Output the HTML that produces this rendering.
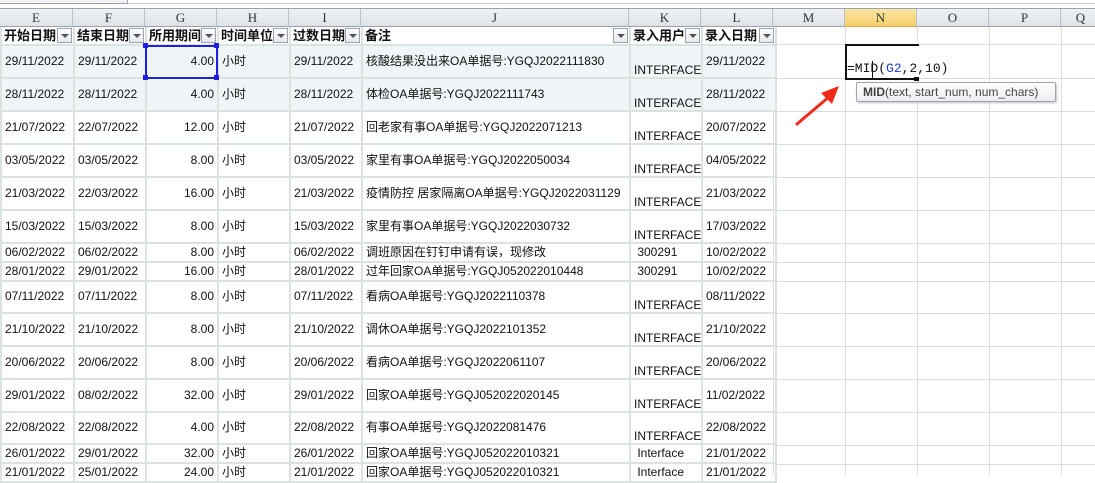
<!DOCTYPE html><html><head><meta charset="utf-8"><style>
*{margin:0;padding:0;box-sizing:border-box}
body{width:1095px;height:474px;overflow:hidden;background:#fff;position:relative;font-family:"Liberation Sans","Noto Sans CJK SC",sans-serif;font-size:12px;color:#111}
.top{position:absolute;left:0;top:0;width:1095px;height:9px;background:#fff;border-bottom:1px solid #9aa3ad}
.top .a{position:absolute;left:0;top:0;width:128px;height:4px;border-right:1px solid #9aa3ad;border-bottom:1px solid #9aa3ad;background:#f3f4f6}
.top .b{position:absolute;left:128px;top:0;width:967px;height:4px;border-bottom:1px solid #c6ccd2}
.ch{position:absolute;top:9px;height:18px;background:linear-gradient(#f0f2f5,#dfe3e8);border-right:1px solid #b9c0c9;border-bottom:1px solid #9aa3ad;font-family:"Liberation Serif",serif;font-size:13px;color:#333;text-align:center;line-height:17px}
.grid{position:absolute;left:773px;top:27px;width:322px;height:447px;
background-image:linear-gradient(90deg,#dadcdd 1px,transparent 1px);background-size:72px 100%;background-position:0 0}
.hl{position:absolute;left:773px;width:322px;height:1px;background:#dadcdd}
table{position:absolute;left:0;top:26px;width:775px;border-collapse:collapse;table-layout:fixed}
td{border:2px solid #dbe3e1;white-space:nowrap;overflow:hidden;padding:0 3px;vertical-align:middle;font-size:12px;line-height:13px}
tr.h td{font-weight:bold;font-size:13px;height:18px;position:relative;padding:0 2px;border-top:1px solid #c8cdd3}
.dd{position:absolute;right:1px;top:1px;width:15px;height:15px;border:1px solid #9aa3ad;background:linear-gradient(#fff,#e6e9ed)}
.dd:after{content:"";position:absolute;left:3px;top:5px;border-left:4px solid transparent;border-right:4px solid transparent;border-top:4px solid #555}
.r td.n{text-align:right}
.r td.k{vertical-align:bottom;padding-bottom:0}
.s td{background:#f0f5f8}
tr.t td{height:33px}
tr.u td{height:32px}
tr.m td{height:19px}
</style></head><body>
<div class="top"><div class="a"></div><div class="b"></div></div>
<div class="grid"></div>
<div class="hl" style="top:44px"></div><div class="hl" style="top:78px"></div><div class="hl" style="top:111px"></div><div class="hl" style="top:144px"></div><div class="hl" style="top:177px"></div><div class="hl" style="top:210px"></div><div class="hl" style="top:243px"></div><div class="hl" style="top:262px"></div><div class="hl" style="top:281px"></div><div class="hl" style="top:313px"></div><div class="hl" style="top:346px"></div><div class="hl" style="top:379px"></div><div class="hl" style="top:412px"></div><div class="hl" style="top:445px"></div><div class="hl" style="top:464px"></div>
<table>
<colgroup><col style="width:73px"><col style="width:72px"><col style="width:72px"><col style="width:72px"><col style="width:72px"><col style="width:268px"><col style="width:72px"><col style="width:74px"></colgroup>
<tr class="h"><td>开始日期<span class="dd"></span></td><td>结束日期<span class="dd"></span></td><td>所用期间<span class="dd"></span></td><td>时间单位<span class="dd"></span></td><td>过数日期<span class="dd"></span></td><td>备注<span class="dd"></span></td><td>录入用户<span class="dd"></span></td><td>录入日期<span class="dd"></span></td></tr>
<tr class="r s t"><td>29/11/2022</td><td>29/11/2022</td><td class="n">4.00</td><td>小时</td><td>29/11/2022</td><td>核酸结果没出来OA单据号:YGQJ2022111830</td><td class="k">INTERFACE</td><td>29/11/2022</td></tr>
<tr class="r s t"><td>28/11/2022</td><td>28/11/2022</td><td class="n">4.00</td><td>小时</td><td>28/11/2022</td><td>体检OA单据号:YGQJ2022111743</td><td class="k">INTERFACE</td><td>28/11/2022</td></tr>
<tr class="r t"><td>21/07/2022</td><td>22/07/2022</td><td class="n">12.00</td><td>小时</td><td>21/07/2022</td><td>回老家有事OA单据号:YGQJ2022071213</td><td class="k">INTERFACE</td><td>20/07/2022</td></tr>
<tr class="r t"><td>03/05/2022</td><td>03/05/2022</td><td class="n">8.00</td><td>小时</td><td>03/05/2022</td><td>家里有事OA单据号:YGQJ2022050034</td><td class="k">INTERFACE</td><td>04/05/2022</td></tr>
<tr class="r t"><td>21/03/2022</td><td>22/03/2022</td><td class="n">16.00</td><td>小时</td><td>21/03/2022</td><td>疫情防控 居家隔离OA单据号:YGQJ2022031129</td><td class="k">INTERFACE</td><td>21/03/2022</td></tr>
<tr class="r t"><td>15/03/2022</td><td>15/03/2022</td><td class="n">8.00</td><td>小时</td><td>15/03/2022</td><td>家里有事OA单据号:YGQJ2022030732</td><td class="k">INTERFACE</td><td>17/03/2022</td></tr>
<tr class="r m"><td>06/02/2022</td><td>06/02/2022</td><td class="n">8.00</td><td>小时</td><td>06/02/2022</td><td>调班原因在钉钉申请有误，现修改</td><td>&nbsp;300291</td><td>10/02/2022</td></tr>
<tr class="r m"><td>28/01/2022</td><td>29/01/2022</td><td class="n">16.00</td><td>小时</td><td>28/01/2022</td><td>过年回家OA单据号:YGQJ052022010448</td><td>&nbsp;300291</td><td>10/02/2022</td></tr>
<tr class="r u"><td>07/11/2022</td><td>07/11/2022</td><td class="n">8.00</td><td>小时</td><td>07/11/2022</td><td>看病OA单据号:YGQJ2022110378</td><td class="k">INTERFACE</td><td>08/11/2022</td></tr>
<tr class="r t"><td>21/10/2022</td><td>21/10/2022</td><td class="n">8.00</td><td>小时</td><td>21/10/2022</td><td>调休OA单据号:YGQJ2022101352</td><td class="k">INTERFACE</td><td>21/10/2022</td></tr>
<tr class="r t"><td>20/06/2022</td><td>20/06/2022</td><td class="n">8.00</td><td>小时</td><td>20/06/2022</td><td>看病OA单据号:YGQJ2022061107</td><td class="k">INTERFACE</td><td>20/06/2022</td></tr>
<tr class="r t"><td>29/01/2022</td><td>08/02/2022</td><td class="n">32.00</td><td>小时</td><td>29/01/2022</td><td>回家OA单据号:YGQJ052022020145</td><td class="k">INTERFACE</td><td>11/02/2022</td></tr>
<tr class="r u"><td>22/08/2022</td><td>22/08/2022</td><td class="n">4.00</td><td>小时</td><td>22/08/2022</td><td>有事OA单据号:YGQJ2022081476</td><td class="k">INTERFACE</td><td>22/08/2022</td></tr>
<tr class="r m"><td>26/01/2022</td><td>29/01/2022</td><td class="n">32.00</td><td>小时</td><td>26/01/2022</td><td>回家OA单据号:YGQJ052022010321</td><td>&nbsp;Interface</td><td>21/01/2022</td></tr>
<tr class="r m"><td>21/01/2022</td><td>25/01/2022</td><td class="n">24.00</td><td>小时</td><td>21/01/2022</td><td>回家OA单据号:YGQJ052022010321</td><td>&nbsp;Interface</td><td>21/01/2022</td></tr>
</table>
<div class="ch" style="left:0;width:73px">E</div><div class="ch" style="left:73px;width:72px">F</div><div class="ch" style="left:145px;width:72px">G</div><div class="ch" style="left:217px;width:72px">H</div><div class="ch" style="left:289px;width:72px">I</div><div class="ch" style="left:361px;width:268px">J</div><div class="ch" style="left:629px;width:72px">K</div><div class="ch" style="left:701px;width:72px">L</div><div class="ch" style="left:773px;width:72px">M</div><div class="ch" style="left:845px;width:72px;background:linear-gradient(#fbe6a6,#f6cf6a);border-bottom-color:#e2a93a">N</div><div class="ch" style="left:917px;width:72px">O</div><div class="ch" style="left:989px;width:72px">P</div><div class="ch" style="left:1061px;width:40px">Q</div>
<div style="position:absolute;left:145px;top:45px;width:73px;height:34px;border:2px solid #1f1fe0"></div>
<div style="position:absolute;left:143px;top:43px;width:5px;height:5px;background:#1f1fe0"></div>
<div style="position:absolute;left:214px;top:43px;width:5px;height:5px;background:#1f1fe0"></div>
<div style="position:absolute;left:143px;top:75px;width:5px;height:5px;background:#1f1fe0"></div>
<div style="position:absolute;left:214px;top:75px;width:5px;height:5px;background:#1f1fe0"></div>
<div style="position:absolute;left:845px;top:44px;width:74px;height:36px;border:2px solid #111;border-right:none;background:#fff"></div>
<div style="position:absolute;left:845px;top:44px;width:74px;height:2px;background:#111"></div>
<div style="position:absolute;left:914px;top:77px;width:5px;height:4px;background:#111"></div>
<div style="position:absolute;left:847px;top:61px;font-family:'Liberation Mono',monospace;font-size:13px;line-height:16px;white-space:nowrap;color:#111">=MID(<span style="color:#1f3fe0">G2</span>,2,10)</div>
<div style="position:absolute;left:872px;top:61px;width:1px;height:17px;background:#111"></div>
<div style="position:absolute;left:856px;top:82px;width:200px;height:20px;border:1px solid #a0a4aa;border-radius:2px;background:linear-gradient(#fff,#eceef1);box-shadow:1px 1px 2px rgba(0,0,0,.25);font-size:12px;line-height:18px;padding-left:6px;color:#444;white-space:nowrap"><b>MID</b>(text, start_num, num_chars)</div>
<svg style="position:absolute;left:790px;top:80px" width="60" height="50"><path d="M7 44 L40 16" stroke="#f02a1a" stroke-width="3" stroke-linecap="round"/><path d="M49 6 L31 13 L42 24 Z" fill="#f02a1a"/></svg>
</body></html>
